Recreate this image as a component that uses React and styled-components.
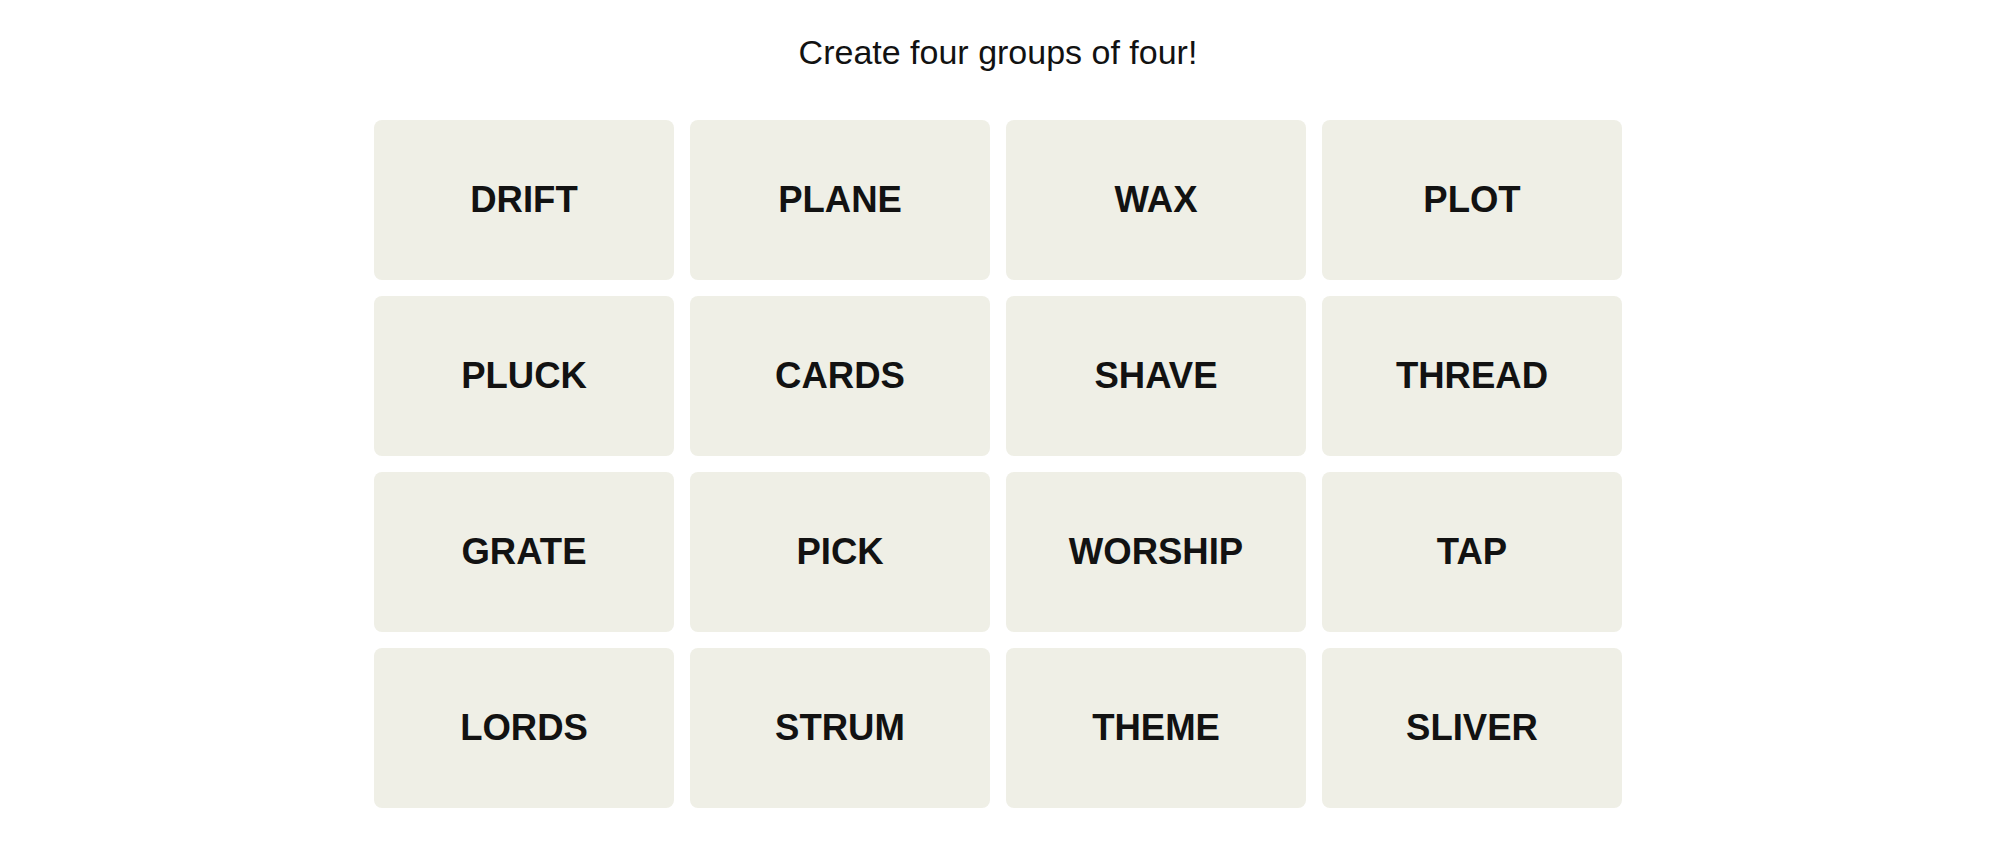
import React from "react";
import styled, { createGlobalStyle } from "styled-components";

const Global = createGlobalStyle`
  html, body { margin: 0; padding: 0; background: #ffffff; }
  body { font-family: "Liberation Sans", Arial, sans-serif; color: #121212; }
`;

const Page = styled.main`
  display: flex;
  flex-direction: column;
  align-items: center;
  padding: 35px 0 0 6px;
`;

const Title = styled.h1`
  margin: 0;
  font-family: "Liberation Sans", Arial, sans-serif;
  font-weight: 400;
  font-size: 34px;
  line-height: 34px;
  color: #121212;
`;

const Board = styled.div`
  margin-top: 51px;
  display: grid;
  grid-template-columns: repeat(4, 300px);
  grid-auto-rows: 160px;
  gap: 16px;
`;

const Tile = styled.button`
  border: none;
  border-radius: 8px;
  background: #efefe6;
  display: flex;
  align-items: center;
  justify-content: center;
  font-family: "Liberation Sans", Arial, sans-serif;
  font-weight: 700;
  font-size: 36.5px;
  color: #121212;
  text-transform: uppercase;
  padding: 0;
  cursor: pointer;
`;

const words = [
  "DRIFT", "PLANE", "WAX", "PLOT",
  "PLUCK", "CARDS", "SHAVE", "THREAD",
  "GRATE", "PICK", "WORSHIP", "TAP",
  "LORDS", "STRUM", "THEME", "SLIVER",
];

export default function App() {
  return (
    <>
      <Global />
      <Page>
        <Title>Create four groups of four!</Title>
        <Board>
          {words.map((w) => (
            <Tile key={w}>{w}</Tile>
          ))}
        </Board>
      </Page>
    </>
  );
}
